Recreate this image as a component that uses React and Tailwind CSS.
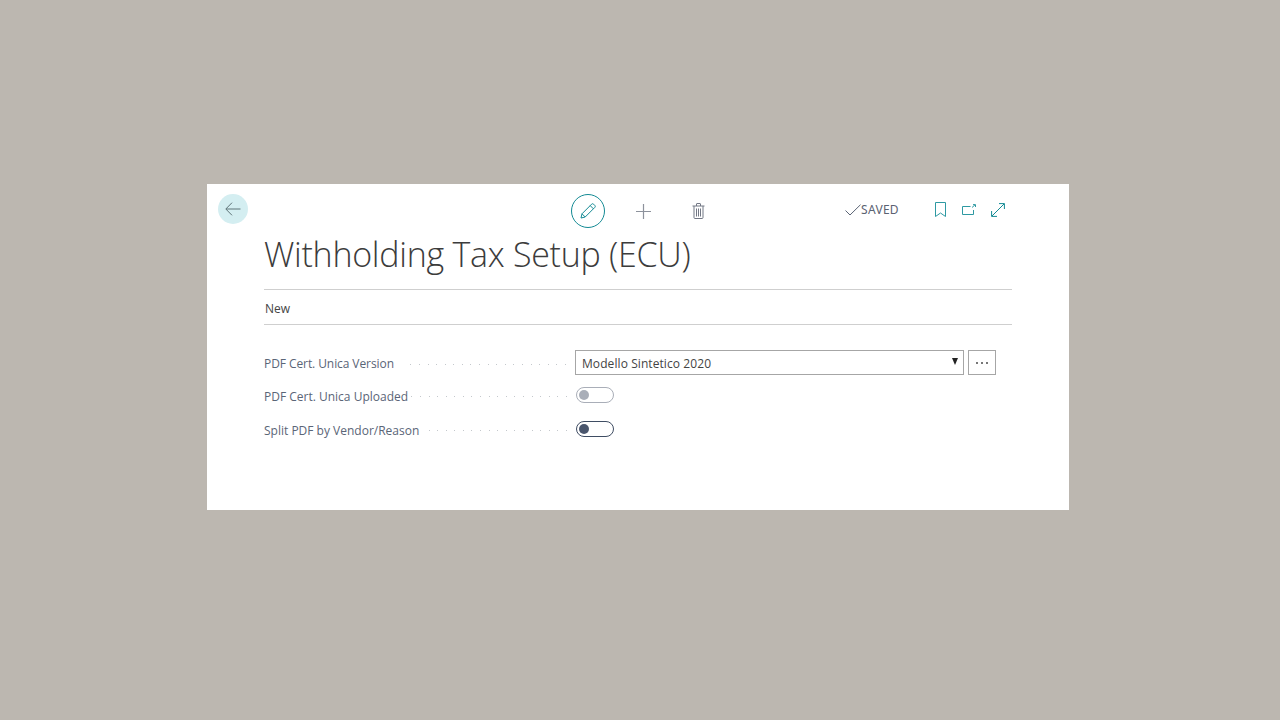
function Leader({ count }) {
  return (
    <div className="flex-1 flex justify-end items-center gap-[7.6px] pr-[9px] mt-[3px]">
      {Array.from({ length: count }).map((_, i) => (
        <span key={i} className="w-px h-px bg-[#c4c8cc]" />
      ))}
    </div>
  )
}

function Toggle({ on }) {
  return (
    <div className={`w-[38px] h-4 rounded-full border bg-white flex items-center pl-[2px] ${on ? 'border-[#3f4d63]' : 'border-[#a9aeb8]'}`}>
      <span className={`w-2.5 h-2.5 rounded-full ${on ? 'bg-[#4a566d]' : 'bg-[#a9aeb8]'}`} />
    </div>
  )
}

export default function App() {
  return (
    <div className="min-h-screen bg-[#bcb7b0] pt-[184px] pl-[207px] font-['Open_Sans','Noto_Sans',sans-serif]">
      <div className="w-[862px] h-[326px] bg-white relative pl-[57px] pr-[57px]">
        {/* back button */}
        <button className="absolute left-[11px] top-[10px] w-[30px] h-[30px] rounded-full bg-[#d4eef1] flex items-center justify-center">
          <svg width="16" height="14" viewBox="0 0 16 14" fill="none" stroke="#5f7478" strokeWidth="1">
            <path d="M15.5 7H1M7 .7 .8 7 7 13.3" />
          </svg>
        </button>

        {/* toolbar */}
        <div className="h-[54px] relative">
          <div className="absolute left-[307px] top-[10px] w-[34px] h-[34px] rounded-full border border-[#138a94] flex items-center justify-center">
            <svg width="16" height="16" viewBox="0 0 16 16" fill="none" stroke="#138a94" strokeWidth="1">
              <path d="M1 15l1-4.2L11.6 1.2a1.4 1.4 0 0 1 2 0l1.2 1.2a1.4 1.4 0 0 1 0 2L5.2 14 1 15zM2 10.8 5.2 14M10.2 2.6l3.2 3.2" />
            </svg>
          </div>
          <svg className="absolute left-[372px] top-[20px]" width="15" height="15" viewBox="0 0 15 15" fill="none" stroke="#8d929c" strokeWidth="1.2">
            <path d="M7.5 0v15M0 7.5h15" />
          </svg>
          <svg className="absolute left-[428px] top-[19px]" width="13" height="16" viewBox="0 0 13 16" fill="none" stroke="#737885" strokeWidth="1">
            <path d="M0.5 3h12M2 3v11.5a1 1 0 0 0 1 1h7a1 1 0 0 0 1-1V3M4.5 3V1a.5.5 0 0 1 .5-.5h3a.5.5 0 0 1 .5.5v2M4.5 5.5v8M6.5 5.5v8M8.5 5.5v8" />
          </svg>
          <div className="absolute left-[581px] top-[18px] flex items-center">
            <svg width="16" height="12" viewBox="0 0 16 12" fill="none" stroke="#5b6475" strokeWidth="1">
              <path d="M.5 6.5 5 11 15.5 .7" />
            </svg>
            <span className="text-xs text-[#5a6272] font-['Noto_Sans',sans-serif] tracking-[0.3px]">SAVED</span>
          </div>
          <svg className="absolute left-[671px] top-[18px]" width="11" height="15" viewBox="0 0 11 15" fill="none" stroke="#2e99a2" strokeWidth="1">
            <path d="M.5 .5h10v14L5.5 11 .5 14.5z" />
          </svg>
          <svg className="absolute left-[698px] top-[20px]" width="14" height="11" viewBox="0 0 14 11" fill="none" stroke="#2e99a2" strokeWidth="1">
            <path d="M8.5 2.5H.5v8h11V6M10 3.5 13 .8M11 .6H13.5V3" />
          </svg>
          <svg className="absolute left-[727px] top-[19px]" width="14" height="14" viewBox="0 0 14 14" fill="none" stroke="#138a94" strokeWidth="1">
            <path d="M.8 13.2 13.2 .8M8 .6h5.4V6M.6 8v5.4H6" />
          </svg>
        </div>

        {/* title */}
        <h1 className="text-[34px] leading-[33px] font-light text-[#3c3c3c] tracking-[-0.27px] h-[51px] whitespace-nowrap">
          Withholding Tax Setup (ECU)
        </h1>

        {/* action bar */}
        <div className="border-t border-b border-[#cfcfcf] h-[36px] flex items-center pl-px pt-[3px] text-xs text-[#444]">
          New
        </div>

        {/* fields */}
        <div className="mt-[25px] flex flex-col text-[#5a6577] text-xs">
          <div className="flex items-center h-[25px]">
            <div className="w-[311px] flex items-center h-full">
              <span className="whitespace-nowrap pt-[2px] tracking-[-0.08px]">PDF Cert. Unica Version</span>
              <Leader count={19} />
            </div>
            <div className="w-[389px] h-[25px] border border-[#a6a6a6] flex items-center justify-between pl-1.5 pr-[5px] text-[#444]">
              <span className="pt-[2px] tracking-[0.08px]">Modello Sintetico 2020</span>
              <span className="w-0 h-0 border-l-[3.5px] border-r-[3.5px] border-t-[7px] border-l-transparent border-r-transparent border-t-[#222] mb-[3px]" />
            </div>
            <div className="ml-1 w-7 h-[25px] border border-[#a6a6a6] flex items-center justify-center gap-[3px]">
              <span className="w-0.5 h-0.5 bg-[#777]" />
              <span className="w-0.5 h-0.5 bg-[#777]" />
              <span className="w-0.5 h-0.5 bg-[#777]" />
            </div>
          </div>
          <div className="flex items-center h-[34px] mt-[3px]">
            <div className="w-[312px] flex items-center h-full">
              <span className="whitespace-nowrap pt-[3px]">PDF Cert. Unica Uploaded</span>
              <Leader count={19} />
            </div>
            <Toggle />
          </div>
          <div className="flex items-center h-[34px]">
            <div className="w-[312px] flex items-center h-full">
              <span className="whitespace-nowrap pt-[3px]">Split PDF by Vendor/Reason</span>
              <Leader count={17} />
            </div>
            <Toggle on />
          </div>
        </div>
      </div>
    </div>
  )
}
